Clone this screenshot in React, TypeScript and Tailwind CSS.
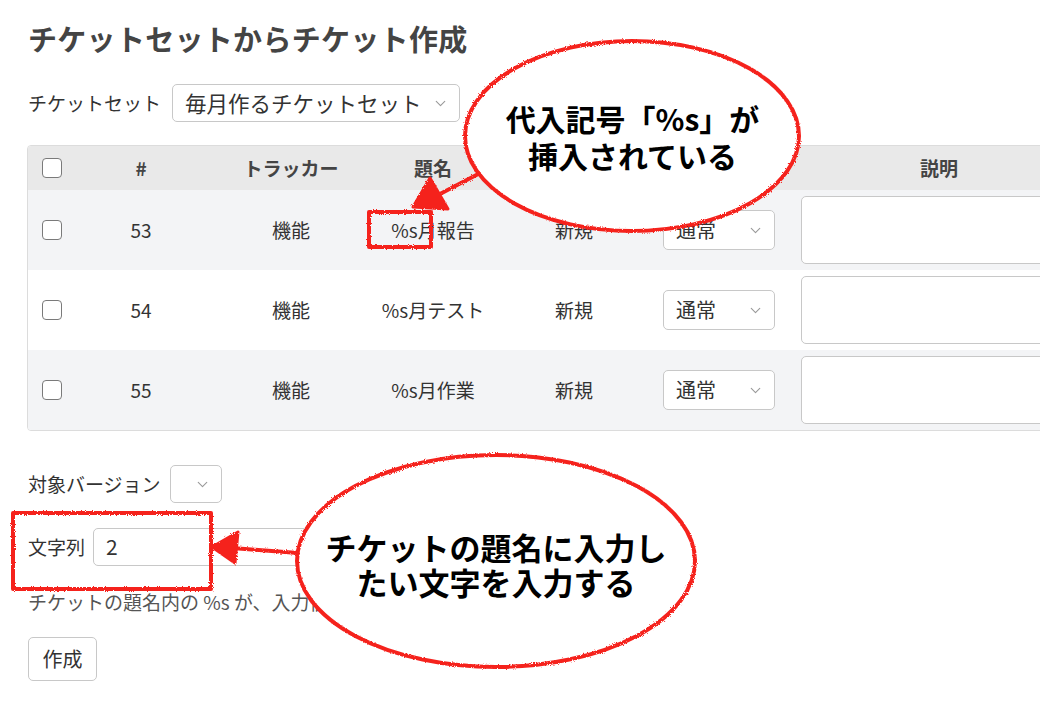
import React from "react";
import { ChevronDown } from "lucide-react";

const font = { fontFamily: '"Noto Sans CJK JP", "Noto Sans", sans-serif' };

function Checkbox() {
  return <div className="w-[20px] h-[20px] border-[1.5px] border-[#7a7a7a] rounded-[4px] bg-white" />;
}

function Select({ text, w, h, textSize = "text-[20px]", pl = "pl-[12px]" }: { text: string; w: string; h: string; textSize?: string; pl?: string }) {
  return (
    <div className={`${w} ${h} ${pl} pr-[10px] flex items-center justify-between border border-[#c8c8c8] rounded-[5px] bg-white ${textSize} text-[#333]`}>
      <span className="whitespace-nowrap">{text}</span>
      <ChevronDown size={17} strokeWidth={1.6} color="#9a9a9a" />
    </div>
  );
}

const rows = [
  { id: "53", subject: "%s月報告", bg: "bg-[#f3f4f6]" },
  { id: "54", subject: "%s月テスト", bg: "bg-white" },
  { id: "55", subject: "%s月作業", bg: "bg-[#f3f4f6]" },
];

const gridCols = "grid grid-cols-[51px_124px_176px_108px_174px_128px_320px]";

export default function App() {
  return (
    <div className="relative w-[1040px] h-[703px] overflow-hidden bg-white text-[#333]" style={font}>
      <div className="pl-[28px] pt-[20px] flex flex-col items-start">
        <h1 className="text-[29px] leading-[36px] font-bold text-[#444] tracking-[0.3px]">チケットセットからチケット作成</h1>

        <div className="mt-[28px] flex items-center gap-[11px]">
          <span className="text-[19px]">チケットセット</span>
          <Select text="毎月作るチケットセット" w="w-[288px]" h="h-[38px]" textSize="text-[21.5px]" />
        </div>

        <div className="mt-[23px] -ml-[1px] w-[1120px] border border-[#dcdcdc] rounded-[4px] overflow-hidden text-[19px]">
          <div className={`${gridCols} h-[44px] bg-[#e9e9e9] font-bold items-center text-center text-[#444]`}>
            <div className="pl-[14px] flex"><Checkbox /></div>
            <div>#</div>
            <div>トラッカー</div>
            <div>題名</div>
            <div></div>
            <div></div>
            <div className="pr-[20px]">説明</div>
          </div>
          {rows.map((r) => (
            <div key={r.id} className={`${gridCols} h-[80px] ${r.bg} items-center text-center`}>
              <div className="pl-[14px] flex"><Checkbox /></div>
              <div>{r.id}</div>
              <div>機能</div>
              <div className="whitespace-nowrap">{r.subject}</div>
              <div>新規</div>
              <div className="flex pl-[2px]">
                <Select text="通常" w="w-[112px]" h="h-[40px]" />
              </div>
              <div className="flex pl-[12px]">
                <div className="w-[300px] h-[68px] border border-[#c8c8c8] rounded-[5px] bg-white" />
              </div>
            </div>
          ))}
        </div>

        <div className="mt-[34px] flex items-center gap-[9px]">
          <span className="text-[19px]">対象バージョン</span>
          <Select text="" w="w-[52px]" h="h-[38px]" pl="pl-[14px]" />
        </div>

        <div className="mt-[25px] flex items-center gap-[8px]">
          <span className="text-[19px]">文字列</span>
          <div className="w-[260px] h-[38px] border border-[#c8c8c8] rounded-[5px] bg-white flex items-center pl-[12px] text-[21px]">2</div>
        </div>

        <p className="mt-[25px] text-[19px] leading-[22px] text-[#555]">チケットの題名内の %s が、入力値に置換されます</p>

        <button className="mt-[24px] w-[69px] h-[44px] border border-[#c8c8c8] rounded-[5px] bg-white text-[20px]">作成</button>
      </div>

      {/* annotations */}
      <svg className="absolute inset-0 pointer-events-none" width="1040" height="703" viewBox="0 0 1040 703">
        <defs>
          <filter id="rough" x="-5%" y="-5%" width="110%" height="110%">
            <feTurbulence type="fractalNoise" baseFrequency="0.9" numOctaves="2" seed="3" result="n" />
            <feDisplacementMap in="SourceGraphic" in2="n" scale="3" />
          </filter>
        </defs>
        <g filter="url(#rough)" stroke="#f5231f" strokeLinejoin="round" strokeLinecap="round">
          <line x1="484" y1="171" x2="438" y2="195" strokeWidth="4" />
          <polygon points="430,178 413,207 448,209" fill="#f5231f" strokeWidth="3" />
          <rect x="369" y="212" width="62" height="35" fill="none" strokeWidth="4" />
          <ellipse cx="632" cy="136" rx="167" ry="95" fill="white" strokeWidth="4" />

          <line x1="298" y1="553" x2="232" y2="548" strokeWidth="4" />
          <polygon points="212,547 238,532 235,563" fill="#f5231f" strokeWidth="3" />
          <rect x="13" y="513" width="198" height="76" fill="none" strokeWidth="4" />
          <ellipse cx="496" cy="561" rx="199" ry="106" fill="white" strokeWidth="4" />
        </g>
      </svg>

      <div className="absolute left-[465px] top-[100px] w-[335px] text-center text-[30px] leading-[37px] font-bold text-black">
        <div>代入記号「%s」が</div>
        <div>挿入されている</div>
      </div>
      <div className="absolute left-[297px] top-[529px] w-[398px] text-center text-[31px] leading-[35px] font-bold text-black">
        <div>チケットの題名に入力し</div>
        <div>たい文字を入力する</div>
      </div>
    </div>
  );
}
